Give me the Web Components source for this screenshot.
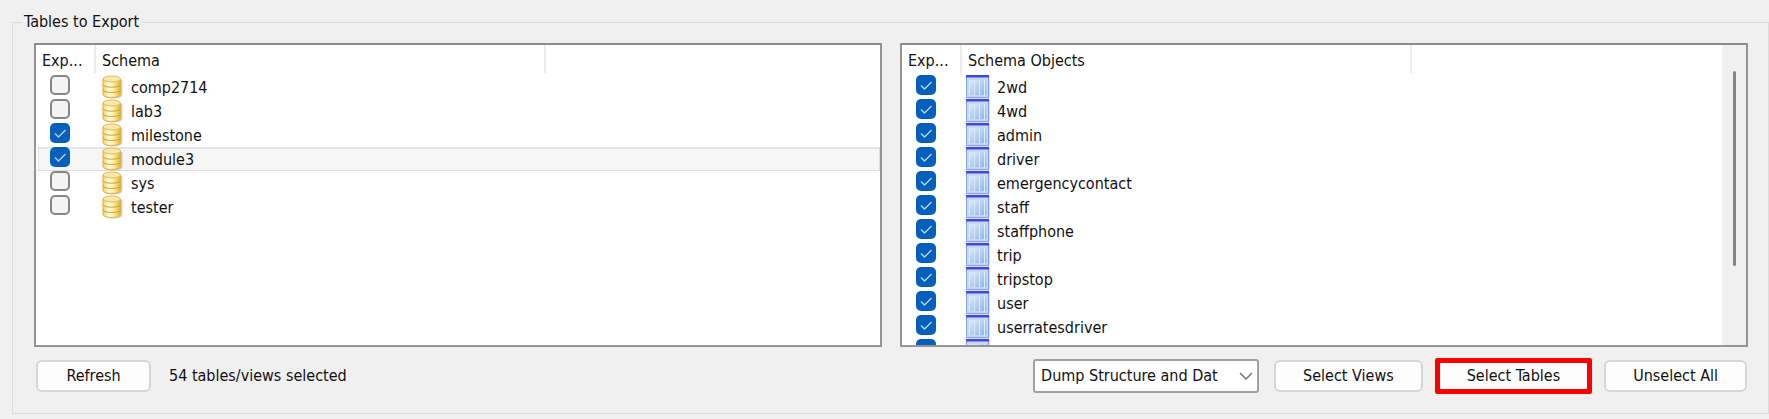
<!DOCTYPE html>
<html lang="en">
<head>
<meta charset="utf-8">
<title>Tables to Export</title>
<style>
  body { margin: 0; padding: 10px 0 4px 12px; background: #f0f0f0; color: #111; font: 16px/24px "DejaVu Sans Condensed", "Noto Sans", sans-serif; }
  .lists { display: grid; grid-template-columns: 1fr 1fr; gap: 18px; }
</style>
</head>
<body>
<group-box caption="Tables to Export">
  <div class="lists">
    <check-list heading="Schema" kind="schema"></check-list>
    <check-list heading="Schema Objects" kind="table"></check-list>
  </div>
  <action-bar>
    <push-button slot="start">Refresh</push-button>
    <span slot="start">54 tables/views selected</span>
    <drop-down label="Dump content" value="Dump Structure and Dat"></drop-down>
    <push-button>Select Views</push-button>
    <push-button marked>Select Tables</push-button>
    <push-button>Unselect All</push-button>
  </action-bar>
</group-box>

<script>
const DATA = {
  schema: [["comp2714"], ["lab3"], ["milestone", 1], ["module3", 1, 1], ["sys"], ["tester"]],
  table: ["2wd", "4wd", "admin", "driver", "emergencycontact", "staff", "staffphone", "trip", "tripstop", "user", "userratesdriver", "userrequestedride"].map(n => [n, 1])
};
const ICONS = {
  schema: `<svg width="24" height="24" viewBox="0 0 24 24" aria-hidden="true">
    <defs><linearGradient id="g"><stop offset="0" stop-color="#f3d467"/><stop offset=".35" stop-color="#fffbe0"/><stop offset=".65" stop-color="#fbe98f"/><stop offset="1" stop-color="#deb23c"/></linearGradient></defs>
    <path d="M4 5v15.500c1 4 17 4 18.500 0V5z" fill="#000" opacity=".18"/>
    <path d="M3 4v15.500c0 4 17.500 4 17.500 0V4z" fill="url(#g)" stroke="#dcb44a"/>
    <ellipse cx="11.750" cy="4" rx="8.750" ry="3" fill="#fbe8a6" stroke="#e0bc5c"/>
    <path d="M3 9.500c0 3.600 17.500 3.600 17.500 0M3 14.800c0 3.600 17.500 3.600 17.500 0" fill="none" stroke="#cda23c"/></svg>`,
  table: `<svg width="24" height="24" viewBox="0 0 24 24" aria-hidden="true">
    <defs><linearGradient id="g" x2="1" y2="1"><stop offset="0" stop-color="#dfebfc"/><stop offset="1" stop-color="#8fb1e4"/></linearGradient></defs>
    <path d="M1 1h22.500v22.500H1z" fill="#777" opacity=".45"/>
    <path d="M.5.5h22v22H.5z" fill="#c3d9f7" stroke="#7ba3de"/>
    <path d="M3 5h17.500v15H3z" fill="url(#g)"/>
    <path d="M3.500 5v15M8.500 5v15M13.500 5v15M18.500 5v15" stroke="#dceafc" stroke-width="1"/>
    <path d="M0 0h23v2.500H0z" fill="#4346dc"/></svg>`
};
const TICK = `url("data:image/svg+xml,%3Csvg xmlns='http://www.w3.org/2000/svg' width='20' height='20'%3E%3Cpath d='M5 10.500l3.500 3.500 7-7' fill='none' stroke='%23b4d2ef' stroke-width='1.400'/%3E%3C/svg%3E")`;

class GroupBox extends HTMLElement {
  connectedCallback() {
    this.attachShadow({ mode: "open" }).innerHTML = `<style>
      :host { display: block; }
      fieldset { margin: 0; min-width: 0; border: 1px solid #dcdcdc; padding: 9px 20px 20px 21px; }
      legend { margin-left: -12px; padding: 0 3px 0 2px; height: 24px; }
      </style><fieldset><legend>${this.getAttribute("caption")}</legend><slot></slot></fieldset>`;
  }
}

class CheckList extends HTMLElement {
  connectedCallback() {
    const kind = this.getAttribute("kind"), heading = this.getAttribute("heading");
    const rows = DATA[kind].map(([name, on, focus], i) => `<tr${focus ? ' class="focus"' : ""}>
      <td class="tick"><input type="checkbox" id="c${i}" ${on ? "checked" : ""}></td>
      <td colspan="2"><label for="c${i}">${ICONS[kind]}<span>${name}</span></label></td></tr>`).join("");
    this.attachShadow({ mode: "open" }).innerHTML = `<style>
      :host { display: flex; box-sizing: border-box; height: 304px; overflow: hidden; border: 2px solid #949494; border-top-color: #8a8a8a; background: #fff; }
      .view { flex: 1; min-width: 0; }
      table { width: 100%; table-layout: fixed; border-collapse: separate; border-spacing: 0; }
      th, td { padding: 0; font-weight: 400; text-align: left; white-space: nowrap; }
      thead th { box-sizing: border-box; height: 28px; padding: 4px 0 0 6px; border-right: 2px solid #ececec; line-height: 24px; }
      thead th:last-child { border: 0; }
      tbody::before { content: ""; display: block; height: 2px; }
      td { height: 24px; box-sizing: border-box; vertical-align: top; }
      .tick { padding-left: 14px; }
      label { display: flex; gap: 7px; padding-left: 4px; height: 24px; }
      label span { padding-top: 2px; line-height: 22px; }
      svg { flex: none; }
      .focus td { background: #f6f6f6; box-shadow: inset 0 2px #e6e6e6, inset 0 -1px #dedede; }
      .focus td:first-child { border-left: 2px solid #fff; padding-left: 12px; box-shadow: inset 1px 0 #dedede, inset 0 2px #e6e6e6, inset 0 -1px #dedede; }
      .focus td:last-child { box-shadow: inset -1px 0 #dedede, inset 0 2px #e6e6e6, inset 0 -1px #dedede; }
      input { appearance: none; display: block; margin: 0; width: 20px; height: 20px; border: 2px solid #868686; border-radius: 5px; background: #f4f4f4; }
      input:checked { border: 0; background: #0660bb ${TICK}; }
      .bar { display: flex; justify-content: center; width: 24px; background: #f0f0f0; padding-top: 26px; box-sizing: border-box; }
      .thumb { width: 3px; height: 195px; border-radius: 2px; background: #858585; }
      </style><div class="view"><table><colgroup><col style="width:60px"><col style="width:450px"><col></colgroup>
      <thead><tr><th>Exp...</th><th>${heading}</th><th></th></tr></thead><tbody>${rows}</tbody></table></div>
      ${kind === "table" ? '<div class="bar"><div class="thumb"></div></div>' : ""}`;
  }
}

class ActionBar extends HTMLElement {
  connectedCallback() {
    this.attachShadow({ mode: "open" }).innerHTML = `<style>
      :host { display: flex; justify-content: space-between; align-items: center; padding: 12px 1px 0 2px; }
      div { display: flex; align-items: center; gap: 15px; }
      .start { gap: 18px; }
      </style><div class="start"><slot name="start"></slot></div><div><slot></slot></div>`;
  }
}

class PushButton extends HTMLElement {
  connectedCallback() {
    this.attachShadow({ mode: "open" }).innerHTML = `<style>
      :host { display: block; position: relative; }
      button { display: block; box-sizing: border-box; min-width: 115px; height: 32px; padding: 0 27px; border: 2px solid #d6d6d6; border-radius: 6px; background: #fdfdfd; color: inherit; font: inherit; line-height: 24px; }
      :host([marked])::after { content: ""; position: absolute; inset: -2px -3px; border: 5px solid #f00; border-radius: 2px; }
      </style><button type="button"><slot></slot></button>`;
  }
}

class DropDown extends HTMLElement {
  connectedCallback() {
    this.attachShadow({ mode: "open" }).innerHTML = `<style>
      :host { display: grid; align-items: center; }
      select, svg { grid-area: 1 / 1; }
      select { appearance: none; width: 226px; height: 34px; padding: 0 36px 0 6px; border: 2px solid #a0a0a0; border-radius: 3px; background: #fff; color: inherit; font: inherit; }
      svg { justify-self: end; margin-right: 6px; pointer-events: none; }
      </style><select aria-label="${this.getAttribute("label")}"><option>${this.getAttribute("value")}</option></select>
      <svg width="14" height="8" viewBox="0 0 14 8" aria-hidden="true"><path d="M1 1l6 6 6-6" fill="none" stroke="#777" stroke-width="1.500"/></svg>`;
  }
}
customElements.define("group-box", GroupBox);
customElements.define("check-list", CheckList);
customElements.define("action-bar", ActionBar);
customElements.define("push-button", PushButton);
customElements.define("drop-down", DropDown);
</script>
</body>
</html>
